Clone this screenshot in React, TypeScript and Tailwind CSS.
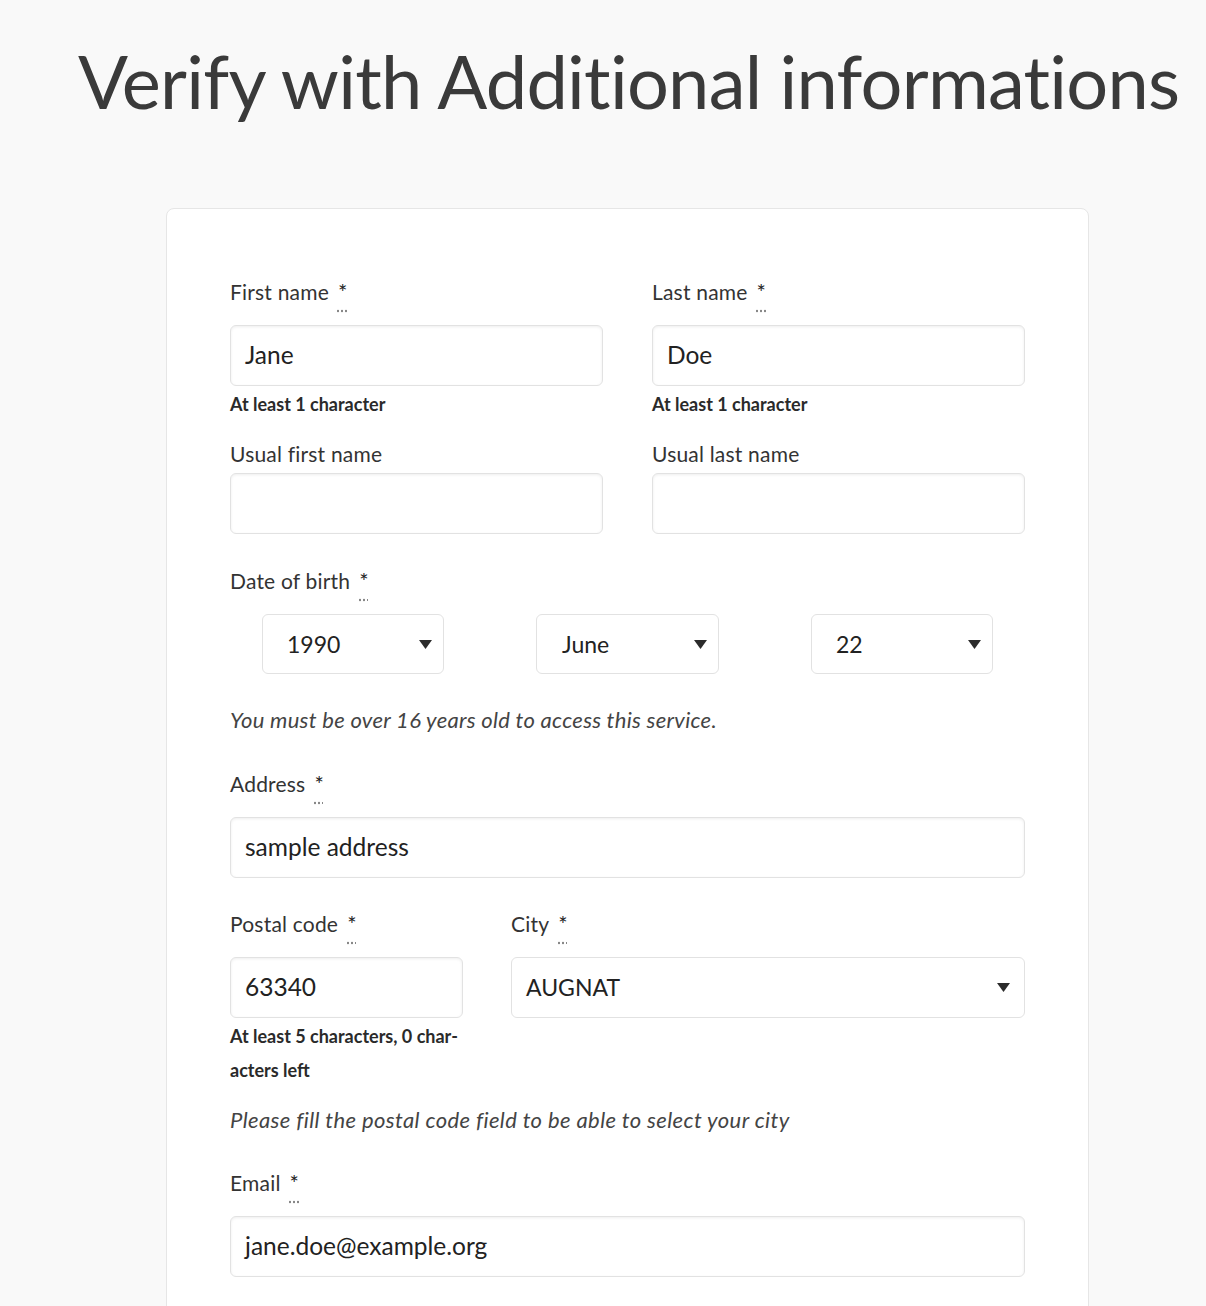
import React from "react";

const font = { fontFamily: "Lato, 'Noto Sans', sans-serif" };

const Label = ({ text, required }: { text: string; required?: boolean }) => {
  return (
    <div
      className={`${required ? "h-[47px]" : "h-[33px]"} text-[21px] leading-[28px] tracking-[0.2px] text-[#333]`}
    >
      {text}
      {required && (
        <abbr
          title="required"
          className="ml-[9px] text-[22px] text-[#222] underline decoration-dotted decoration-[#888] underline-offset-[10px]"
        >
          *
        </abbr>
      )}
    </div>
  );
};

const TextInput = ({ value }: { value?: string }) => {
  return (
    <div className="h-[61px] flex items-center px-[14px] rounded-[6px] border border-[#e2e2e2] bg-white shadow-[inset_0_1px_3px_rgba(0,0,0,0.07)] text-[24.5px] text-[#222]">
      {value}
    </div>
  );
};

const Caret = () => (
  <svg width="13" height="9" viewBox="0 0 13 9">
    <path d="M0 0 H13 L6.5 9 Z" fill="#2b2b2b" />
  </svg>
);

const Select = ({ value, className }: { value: string; className?: string }) => {
  return (
    <div
      className={`h-[60px] flex items-center justify-between rounded-[6px] border border-[#e2e2e2] bg-white text-[23px] text-[#222] ${className ?? ""}`}
    >
      <span>{value}</span>
      <Caret />
    </div>
  );
};

const Help = ({ children }: { children: React.ReactNode }) => (
  <p className="mt-[6px] text-[18px] leading-[24px] font-bold text-[#2a2a2a]">{children}</p>
);

const App = () => {
  return (
    <div className="min-h-screen bg-[#f9f9f9] text-[#333]" style={font}>
      <h1 className="pt-[31px] pl-[78px] text-[74px] leading-[100px] text-[#3a3a3a] tracking-[-0.75px] whitespace-nowrap">
        Verify with Additional informations
      </h1>

      <div className="mt-[77px] ml-[166px] w-[923px] rounded-[8px] border border-[#e6e6e6] bg-white px-[63px] pt-[69px] pb-16">
        {/* Names */}
        <div className="grid grid-cols-2 gap-x-[49px]">
          <div>
            <Label text="First name" required />
            <TextInput value="Jane" />
            <Help>At least 1 character</Help>
          </div>
          <div>
            <Label text="Last name" required />
            <TextInput value="Doe" />
            <Help>At least 1 character</Help>
          </div>
        </div>

        <div className="mt-[24px] grid grid-cols-2 gap-x-[49px]">
          <div>
            <Label text="Usual first name" />
            <TextInput />
          </div>
          <div>
            <Label text="Usual last name" />
            <TextInput />
          </div>
        </div>

        {/* Date of birth */}
        <div className="mt-[33px]">
          <Label text="Date of birth" required />
          <div className="flex justify-between px-[32px]">
            <Select value="1990" className="w-[182px] pl-[24px] pr-[11px]" />
            <Select value="June" className="w-[183px] pl-[25px] pr-[11px]" />
            <Select value="22" className="w-[182px] pl-[24px] pr-[11px]" />
          </div>
          <p className="mt-[32px] text-[22px] leading-[28px] tracking-[0.3px] italic text-[#444]">
            You must be over 16 years old to access this service.
          </p>
        </div>

        {/* Address */}
        <div className="mt-[36px]">
          <Label text="Address" required />
          <TextInput value="sample address" />
        </div>

        <div className="mt-[32px] flex gap-x-[48px]">
          <div className="w-[233px] shrink-0">
            <Label text="Postal code" required />
            <TextInput value="63340" />
            <p className="mt-[1px] text-[18px] leading-[34px] font-bold text-[#2a2a2a]">
              At least 5 characters, 0 char-
              <br />
              acters left
            </p>
          </div>
          <div className="flex-1">
            <Label text="City" required />
            <Select value="AUGNAT" className="h-[61px] pl-[14px] pr-[14px]" />
          </div>
        </div>

        <p className="mt-[19px] text-[22px] leading-[28px] tracking-[0.4px] italic text-[#444]">
          Please fill the postal code field to be able to select your city
        </p>

        {/* Email */}
        <div className="mt-[35px]">
          <Label text="Email" required />
          <TextInput value="jane.doe@example.org" />
        </div>
      </div>
    </div>
  );
};

export default App;
